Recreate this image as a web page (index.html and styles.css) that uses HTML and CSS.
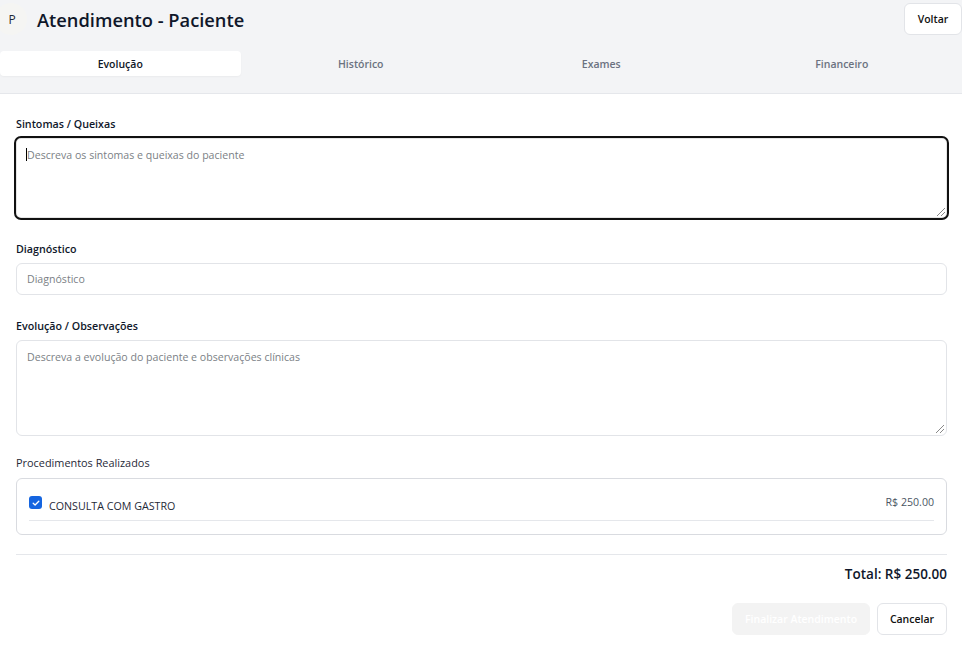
FILE: index.html
```html
<!DOCTYPE html>
<html lang="pt">
<head>
<meta charset="utf-8">
<title>Atendimento - Paciente</title>
<link rel="stylesheet" href="styles.css">
</head>
<body>
<div class="top">
  <header class="header">
    <div class="avatar">P</div>
    <h1 class="title">Atendimento - Paciente</h1>
    <button class="btn btn-outline voltar">Voltar</button>
  </header>
  <nav class="tabs">
    <div class="tab active">Evolução</div>
    <div class="tab">Histórico</div>
    <div class="tab">Exames</div>
    <div class="tab">Financeiro</div>
  </nav>
</div>
<main class="content">
  <div class="field first">
    <label class="label">Sintomas / Queixas</label>
    <div class="textarea focused"><span class="caret"></span><span class="ph">Descreva os sintomas e queixas do paciente</span><span class="grip"></span></div>
  </div>
  <div class="field second">
    <label class="label">Diagnóstico</label>
    <div class="input"><span class="ph">Diagnóstico</span></div>
  </div>
  <div class="field third">
    <label class="label">Evolução / Observações</label>
    <div class="textarea tall"><span class="ph">Descreva a evolução do paciente e observações clínicas</span><span class="grip"></span></div>
  </div>
  <div class="field last">
    <label class="label light">Procedimentos Realizados</label>
    <div class="card">
      <div class="proc">
        <span class="check"><svg viewBox="0 0 12 12" width="12" height="12"><path d="M3.2 6.2 5.1 8 8.8 4.2" fill="none" stroke="#fff" stroke-width="1.3" stroke-linecap="round" stroke-linejoin="round"/></svg></span>
        <span class="proc-name">CONSULTA COM GASTRO</span>
        <span class="proc-price">R$ 250.00</span>
      </div>
    </div>
  </div>
  <div class="total">Total: R$ 250.00</div>
  <div class="actions">
    <button class="btn btn-disabled">Finalizar Atendimento</button>
    <button class="btn btn-outline cancel">Cancelar</button>
  </div>
</main>
</body>
</html>
```
FILE: styles.css
```css
* { box-sizing: border-box; }
html, body { margin: 0; padding: 0; background: #fff; }
body {
  font-family: "Open Sans", "Noto Sans", "Liberation Sans", sans-serif;
  color: #111827;
  width: 962px;
  overflow: hidden;
}
.top {
  background: #f3f4f6;
  border-bottom: 1px solid #e5e7eb;
  height: 94px;
}
.header {
  display: flex;
  align-items: center;
  height: 38px;
  padding: 0;
}
.avatar {
  width: 32px;
  height: 32px;
  border-radius: 50%;
  background: #f5f5f3;
  margin-left: -5px;
  display: flex;
  align-items: center;
  justify-content: center;
  font-size: 12px;
  color: #1f2937;
  padding-left: 2px;
}
.title {
  margin: 0 0 0 10px;
  font-size: 18.3px;
  font-weight: 600;
  color: #0f172a;
  flex: 1;
}
.btn {
  font-family: inherit;
  font-size: 10.5px;
  font-weight: 600;
  border-radius: 6px;
  height: 32px;
  padding: 0;
  cursor: pointer;
}
.btn-outline {
  background: #fff;
  border: 1px solid #e2e4e8;
  color: #111;
}
.voltar { width: 58px; }
.cancel { width: 70px; }
.tabs {
  display: grid;
  grid-template-columns: repeat(4, 1fr);
  margin-top: 13px;
  height: 25px;
}
.tab {
  display: flex;
  align-items: center;
  justify-content: center;
  font-size: 10.5px;
  font-weight: 600;
  color: #6b7280;
  border-radius: 4px;
}
.tab.active {
  background: #fff;
  color: #111827;
  box-shadow: 0 1px 2px rgba(0,0,0,0.04);
}
.content {
  padding: 22px 15px 0 16px;
}
.field { margin-bottom: 16px; }
.field.first { margin-bottom: 21px; }
.field.second { margin-bottom: 23px; }
.field.third { margin-bottom: 19px; }
.field.last { margin-bottom: 19px; }
.label {
  display: block;
  font-size: 10.7px;
  font-weight: 600;
  color: #0f172a;
  margin-bottom: 6px;
  line-height: 16px;
}
.first .label { margin-bottom: 4px; }
.label.light { font-size: 10.9px; font-weight: 500; color: #1f2937; margin-bottom: 7px; }
.textarea, .input {
  position: relative;
  border: 1px solid #e2e4e8;
  border-radius: 6px;
  background: #fff;
  font-size: 10.6px;
}
.textarea {
  height: 96px;
  padding: 9px 10px;
}
.textarea.focused {
  height: 84px;
  margin: 0 -2px;
  border: 2px solid #111;
  border-radius: 7px;
  box-shadow: inset 0 0 0 1px #e5e5e5;
  padding: 10px 10px;
}
.input {
  height: 32px;
  display: flex;
  align-items: center;
  padding: 0 10px;
}
.ph { color: #7b7f86; }
.caret {
  display: inline-block;
  width: 1px;
  height: 13px;
  background: #000;
  vertical-align: -2px;
}
.grip {
  position: absolute;
  right: 2px;
  bottom: 2px;
  width: 8px;
  height: 8px;
  background: linear-gradient(135deg, transparent 0 45%, #888 45% 52%, transparent 52% 70%, #888 70% 77%, transparent 77%);
}
.card {
  border: 1px solid #d9dbe0;
  border-radius: 6px;
  padding: 16px 12px 13px 12px;
}
.proc {
  display: flex;
  align-items: center;
  border-bottom: 1px solid #e5e7eb;
  padding-bottom: 6px;
  min-height: 26px;
}
.check {
  width: 13px;
  height: 13px;
  border-radius: 3px;
  background: #1565e0;
  display: flex;
  align-items: center;
  justify-content: center;
  align-self: flex-start;
  margin-top: 1px;
}
.proc-name {
  font-size: 10.7px;
  color: #1f2937;
  margin-left: 7px;
  margin-top: 3px;
  flex: 1;
}
.proc-price {
  font-size: 10.6px;
  color: #4b5563;
  align-self: flex-start;
}
.total {
  border-top: 1px solid #e5e7eb;
  text-align: right;
  font-size: 13.5px;
  font-weight: 600;
  padding-top: 10px;
  color: #0f172a;
}
.actions {
  display: flex;
  justify-content: flex-end;
  gap: 7px;
  margin-top: 20px;
}
.btn-disabled {
  background: #f3f3f3;
  border: 1px solid #f3f3f3;
  color: #fff;
  width: 138px;
}
```
